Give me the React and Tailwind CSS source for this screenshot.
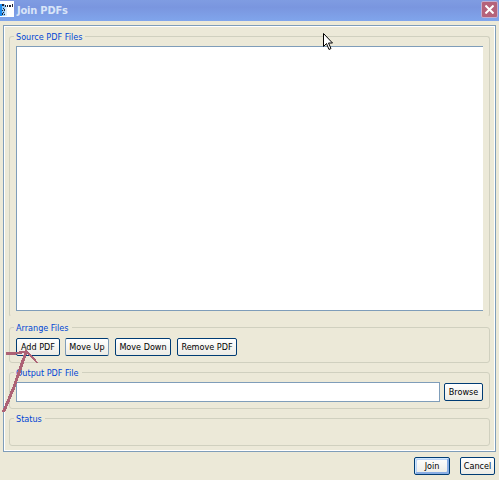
import { useState } from "react";

function Group({ title, className, children }) {
  return (
    <section className={`mx-1 rounded-[3px] border border-[#d0d0bf] px-1.5 ${className}`}>
      <h2 className="-ml-0.5 -mt-[7px] flex h-3.5 w-fit items-center whitespace-nowrap bg-[#ece9d8] pl-0.5 pr-[3px] text-[9px] leading-none text-[#0046d5]">
        {title}
      </h2>
      {children}
    </section>
  );
}

function Button({ className, primary, children, ...props }) {
  return (
    <button
      type="button"
      className={`flex h-[18px] shrink-0 items-center justify-center whitespace-nowrap rounded-[2px] border border-[#003c74] bg-linear-to-b from-white to-[#ecebe5] text-[9px] leading-none text-black ${
        primary ? "shadow-[inset_1px_1px_0_0_#cee7ff,inset_-2px_-2px_0_0_#89ade4,inset_2px_2px_0_0_#bcd4f6]" : ""
      } ${className}`}
      {...props}
    >
      {children}
    </button>
  );
}

export default function App() {
  const [output, setOutput] = useState("");

  return (
    <div className="relative flex h-[480px] w-[499px] flex-col overflow-hidden bg-[#ece9d8] font-['DejaVu_Sans_Condensed','DejaVu_Sans',sans-serif]">
      {/* Title bar */}
      <header className="flex h-[21px] shrink-0 items-center bg-linear-to-b from-[#7f9ce2] via-[#7a96df] via-35% to-[#80a5ec]">
        <svg width="14" height="16" viewBox="0 0 14 16" className="-mt-[3px]" shapeRendering="crispEdges">
          <path fill="#fff" d="M0 0h14v16H0z" />
          <path fill="#1c8cf0" d="M0 3h2v12H0z" />
          <path fill="#8cc8fa" d="M2 3h3v12H2z" />
          <path fill="#d8ecfc" d="M5 5h2v10H5z" />
          <path fill="#223" d="M2 3h2v2H2zM5 4h1v2H5zM7 4h1v2H7zM9 4h2v2H9zM12 3h1v3h-1zM3 7h1v1H3zM4 8h1v2H4zM2 9h1v1H2zM3 11h1v1H3zM2 12h1v2H2zM4 13h1v1H4z" />
        </svg>
        <h1 className="ml-[3px] text-[11px] font-bold leading-none tracking-[-0.2px] text-[#d8e4f8]">Join PDFs</h1>
        <button type="button" aria-label="Close" className="ml-auto mr-px mt-[-3px] flex size-[17px] items-center justify-center rounded-[2px] border border-[#c3aed0] bg-[#b5627a]">
          <svg width="9" height="9" viewBox="0 0 9 9" stroke="#fff" strokeWidth="2">
            <path d="M.5.5l8 8M8.5.5l-8 8" />
          </svg>
        </button>
      </header>

      <main className="ml-[3px] mt-1 flex h-[427px] w-[493px] shrink-0 flex-col border border-[#7f9db9] p-px shadow-[inset_0_0_0_1px_#fff]">
        <Group title="Source PDF Files" className="mt-[9px] h-[281px] border-b-transparent">
          <div className="mt-0.5 h-[265px] w-[467px] border border-r-0 border-[#7f9db9] bg-white" />
        </Group>

        <Group title="Arrange Files" className="mt-2.5 h-9">
          <div className="mt-[3px] flex">
            <Button className="w-11">Add PDF</Button>
            <Button className="ml-[5px] w-11 border-x-[#7f9db9]">Move Up</Button>
            <Button className="ml-1.5 w-14">Move Down</Button>
            <Button className="ml-1.5 w-[60px]">Remove PDF</Button>
          </div>
        </Group>

        <Group title="Output PDF File" className="mt-[9px] h-[37px]">
          <div className="mt-0.5 flex items-center">
            <input
              value={output}
              onChange={(e) => setOutput(e.target.value)}
              className="h-5 w-[424px] shrink-0 border border-[#7f9db9] bg-white px-1 text-[9px] outline-none"
            />
            <Button className="ml-1 w-[39px]">Browse</Button>
          </div>
        </Group>

        <Group title="Status" className="mt-[9px] h-7" />
      </main>

      <footer className="mr-1 mt-[5px] flex justify-end gap-2.5">
        <Button primary className="w-9">Join</Button>
        <Button className="w-[35px]">Cancel</Button>
      </footer>

      {/* Mouse pointer */}
      <svg className="absolute left-[323px] top-[33px]" width="11" height="19" viewBox="0 0 11 19">
        <path d="M.5.5v13l3-3 2.5 6 2-1-2.5-5.5h4z" fill="#fff" stroke="#000" />
      </svg>

      {/* Hand-drawn arrow */}
      <svg className="pointer-events-none absolute left-0 top-[345px]" width="42" height="70" viewBox="0 0 42 70" fill="none" stroke="#ad6275" strokeWidth="3" shapeRendering="crispEdges">
        <path d="M3.5 67L14 42 26 7" />
        <path d="M6 8.5h8L27 6.5" strokeWidth="2.5" />
        <path d="M26 6l11.5 12" strokeWidth="2" />
      </svg>
    </div>
  );
}
